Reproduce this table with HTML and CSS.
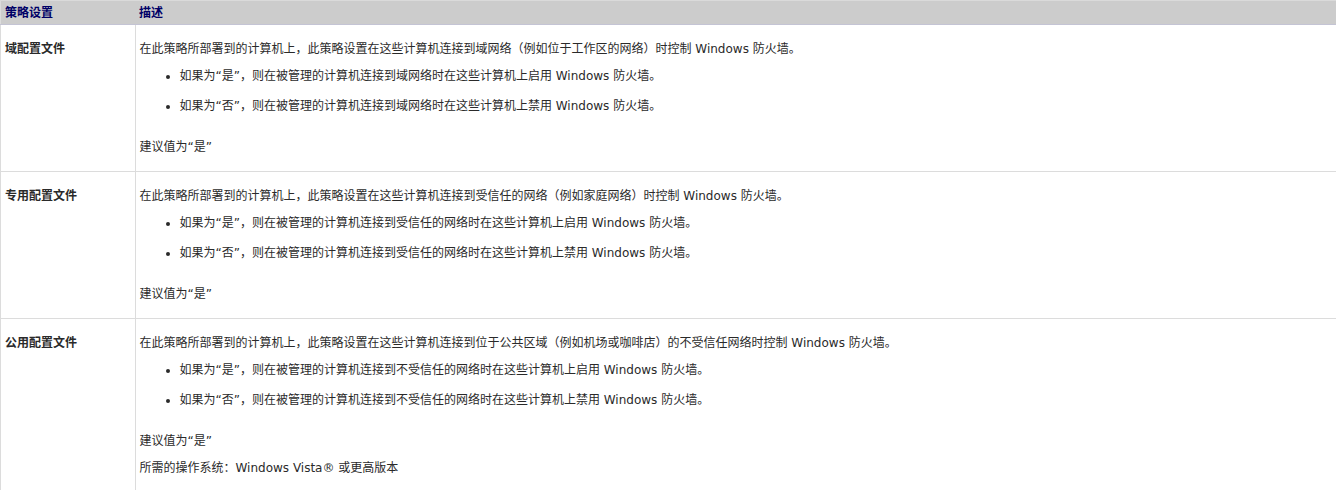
FILE: index.html
```html
<!DOCTYPE html>
<html lang="zh-CN">
  <head>
    <meta charset="UTF-8" />
    <title>Windows 防火墙配置文件</title>
    <link rel="stylesheet" href="styles.css">
  </head>
  <body>
    <table class="policy_table">
      <thead>
        <tr>
          <th class="name_col">策略设置</th>
          <th>描述</th>
        </tr>
      </thead>
      <tbody>
        <tr>
          <td class="name_cell">域配置文件</td>
          <td class="desc_cell">
            <p>在此策略所部署到的计算机上，此策略设置在这些计算机连接到域网络（例如位于工作区的网络）时控制 Windows 防火墙。</p>
            <ul>
              <li>如果为“是”，则在被管理的计算机连接到域网络时在这些计算机上启用 Windows 防火墙。</li>
              <li>如果为“否”，则在被管理的计算机连接到域网络时在这些计算机上禁用 Windows 防火墙。</li>
            </ul>
            <p>建议值为“是”</p>
          </td>
        </tr>
        <tr>
          <td class="name_cell">专用配置文件</td>
          <td class="desc_cell">
            <p>在此策略所部署到的计算机上，此策略设置在这些计算机连接到受信任的网络（例如家庭网络）时控制 Windows 防火墙。</p>
            <ul>
              <li>如果为“是”，则在被管理的计算机连接到受信任的网络时在这些计算机上启用 Windows 防火墙。</li>
              <li>如果为“否”，则在被管理的计算机连接到受信任的网络时在这些计算机上禁用 Windows 防火墙。</li>
            </ul>
            <p>建议值为“是”</p>
          </td>
        </tr>
        <tr>
          <td class="name_cell">公用配置文件</td>
          <td class="desc_cell">
            <p>在此策略所部署到的计算机上，此策略设置在这些计算机连接到位于公共区域（例如机场或咖啡店）的不受信任网络时控制 Windows 防火墙。</p>
            <ul>
              <li>如果为“是”，则在被管理的计算机连接到不受信任的网络时在这些计算机上启用 Windows 防火墙。</li>
              <li>如果为“否”，则在被管理的计算机连接到不受信任的网络时在这些计算机上禁用 Windows 防火墙。</li>
            </ul>
            <p>建议值为“是”</p>
            <p class="note">所需的操作系统：Windows Vista® 或更高版本</p>
          </td>
        </tr>
      </tbody>
    </table>
  </body>
</html>
```

FILE: styles.css
```css
body {
  margin: 0;
  font-family: "DejaVu Sans", "Noto Sans CJK SC", sans-serif;
  font-size: 12px;
  line-height: 17px;
  color: #2a2a2a;
  background-color: #fff;
}

.policy_table {
  width: 100%;
  border-collapse: collapse;
  border-left: 1px solid #dcdcdc;
}

.policy_table th {
  background-color: #cccccc;
  border-top: 1px solid #dadada;
  border-bottom: 1px solid #c4c4d4;
  color: #000066;
  font-weight: bold;
  text-align: left;
  height: 22px;
  padding: 1px 4px 0;
  vertical-align: middle;
}

.name_col {
  width: 126px;
}

.policy_table td {
  border-bottom: 1px solid #dcdcdc;
  vertical-align: top;
  padding: 16px 4px 15px;
}

.name_cell {
  font-weight: bold;
  border-right: 1px solid #dcdcdc;
}

.desc_cell p {
  margin: 0;
}

.desc_cell ul {
  margin: 10px 0 24px;
  padding-left: 40px;
}

.desc_cell li + li {
  margin-top: 13px;
}

.desc_cell .note {
  margin-top: 10px;
}
```
